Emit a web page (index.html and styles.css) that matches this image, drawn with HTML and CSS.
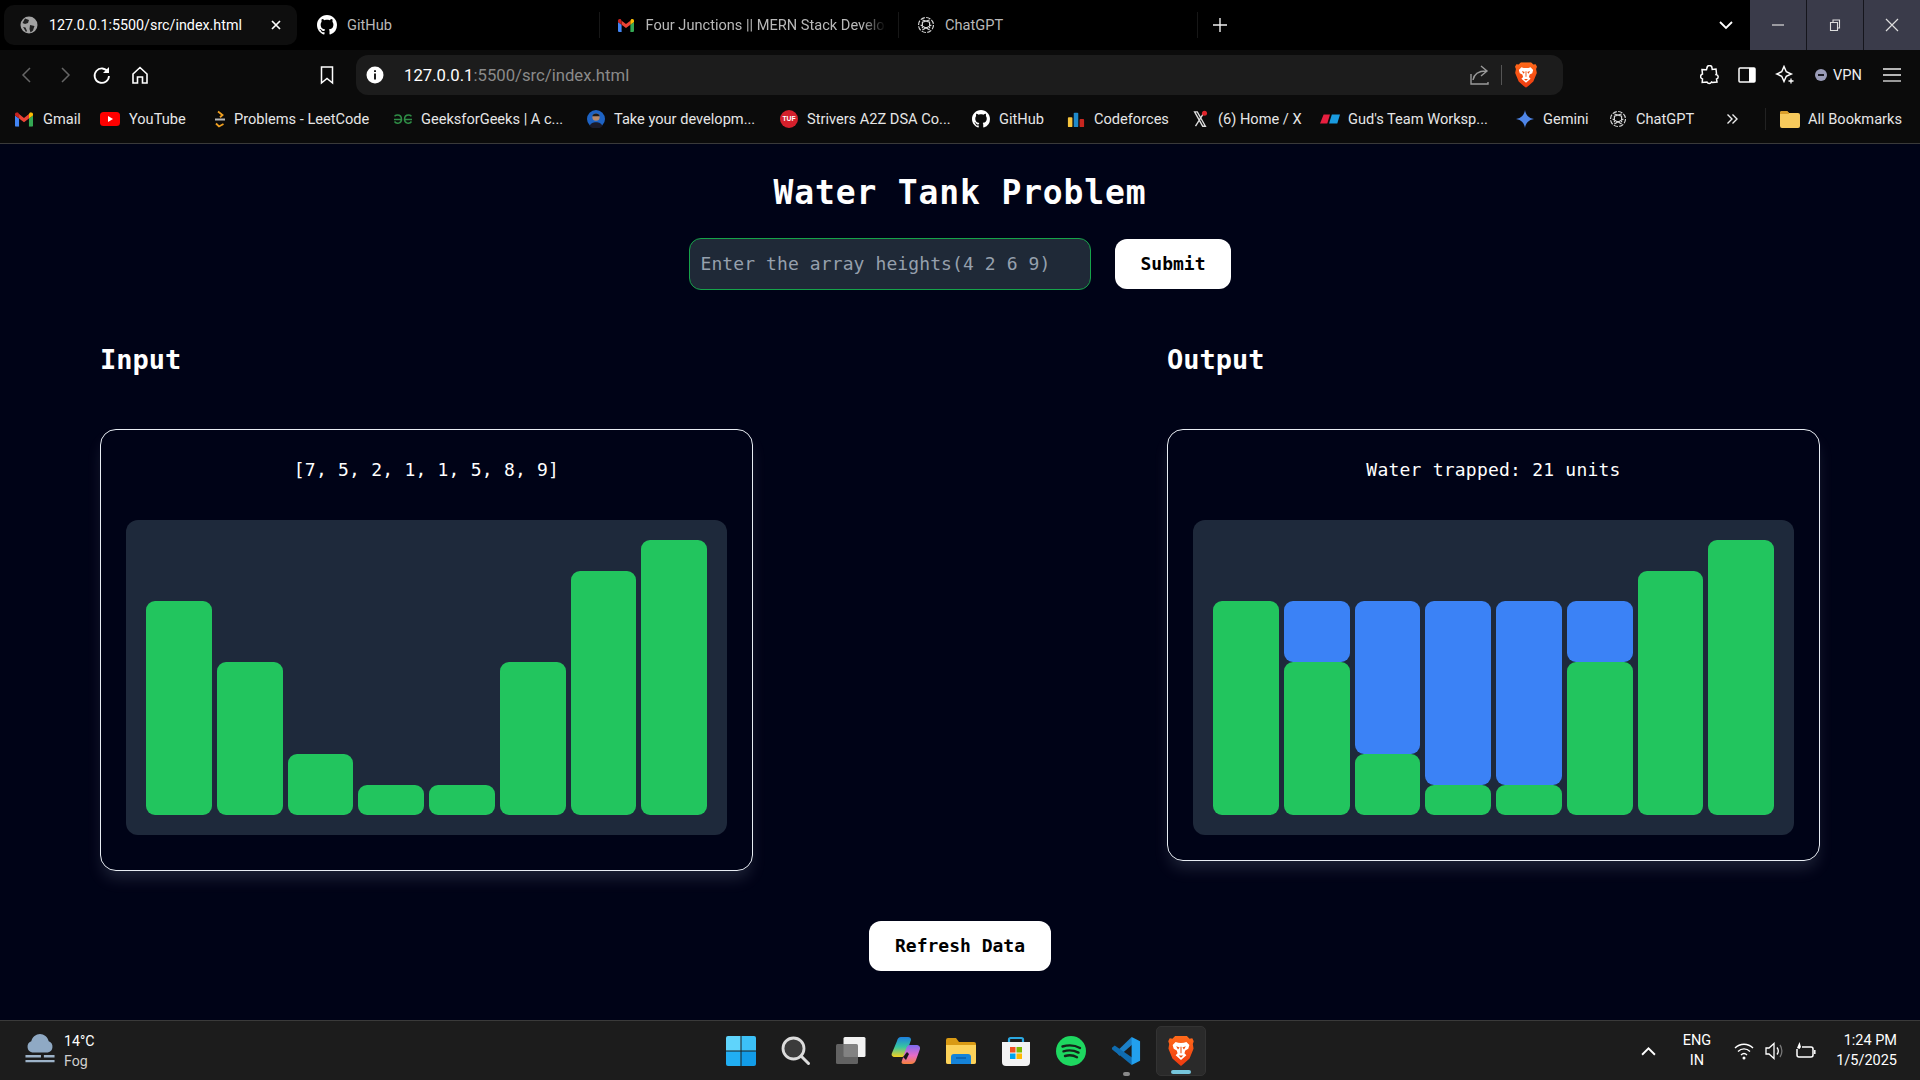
FILE: index.html
```html
<!DOCTYPE html>
<html lang="en">
<head>
<meta charset="utf-8">
<title>Water Tank Problem</title>
<link rel="stylesheet" href="styles.css">
</head>
<body>
<svg class="defs" aria-hidden="true">
  <defs>
    <linearGradient id="braveg" x1="0" y1="0" x2="0" y2="1"><stop offset="0" stop-color="#ff6a1a"/><stop offset="1" stop-color="#ee3a10"/></linearGradient>
  </defs>
  <symbol id="github" viewBox="0 0 16 16"><path fill="#fff" d="M8 0C3.58 0 0 3.58 0 8c0 3.54 2.29 6.53 5.47 7.59.4.07.55-.17.55-.38 0-.19-.01-.82-.01-1.49-2.01.37-2.53-.49-2.69-.94-.09-.23-.48-.94-.82-1.13-.28-.15-.68-.52-.01-.53.63-.01 1.08.58 1.23.82.72 1.21 1.87.87 2.33.66.07-.52.28-.87.51-1.07-1.78-.2-3.64-.89-3.64-3.95 0-.87.31-1.59.82-2.15-.08-.2-.36-1.02.08-2.12 0 0 .67-.21 2.2.82.64-.18 1.32-.27 2-.27.68 0 1.36.09 2 .27 1.53-1.04 2.2-.82 2.2-.82.44 1.1.16 1.92.08 2.12.51.56.82 1.27.82 2.15 0 3.07-1.87 3.75-3.65 3.95.29.25.54.73.54 1.48 0 1.07-.01 1.93-.01 2.2 0 .21.15.46.55.38A8.013 8.013 0 0016 8c0-4.42-3.58-8-8-8z"/></symbol>
  <symbol id="gmail" viewBox="0 0 20 16"><path fill="#4285f4" d="M1 16h3.500V7L0 3.500V15a1 1 0 0 0 1 1z"/><path fill="#34a853" d="M15.500 16H19a1 1 0 0 0 1-1V3.500L15.500 7z"/><path fill="#ea4335" d="M4.500 7V2L10 6.200 15.500 2v5L10 11z"/><path fill="#fbbc04" d="M15.500 2v5L20 3.500V2c0-1.800-2.100-2.800-3.500-1.700z"/><path fill="#c5221f" d="M0 3.500 4.500 7V2L3.500.3C2.100-.8 0 .2 0 2z"/></symbol>
  <symbol id="gpt" viewBox="0 0 20 20"><g fill="none" stroke="#d8d8d8" stroke-width="1.300"><circle cx="10" cy="10" r="8.300" stroke-dasharray="5 1.500"/><path d="M6 4.500 14 7v6.500M14 4.500 6 7v6.500M4 10l6 3.500 6-3.500M6 15.500 10 13l4 2.500"/></g></symbol>
  <symbol id="brave" viewBox="0 0 24 28"><path fill="url(#braveg)" d="M6.500 0h11l2.500 2.500 2.500-.3L24 5l-1 2.500.8 4.200L20 21l-5.500 5L12 28l-2.500-2L4 21 .2 11.700 1 7.500 0 5l1.500-2.800L4 2.500z"/><path fill="#fff" d="M7 5.500c3 1.300 7 1.300 10 0l2.800 3-1 3.500-2.800 1.500-.8 2.700 1.800 1.800L12 22.500 7 18l1.800-1.800L8 13.500 5.200 12l-1-3.500z"/><path fill="#f1500e" d="M7.500 9.500l3.200 1.200-1.500 1.800zM16.500 9.500l-3.200 1.200 1.500 1.800zM9.800 18.300h4.400L12 20.300zM11.500 10h1v6h-1z"/></symbol>
</svg>

<header class="chrome">
  <div class="tabstrip">
    <div class="tab tab-active">
      <svg class="ico-18" viewBox="0 0 18 18"><circle cx="9" cy="9" r="8.500" fill="#a3a3a3"/><path fill="#222" d="M5 2.500 9 4l-1 3-3 1-2.500-1zM10 9l4.500 1-1.500 4.500-2.500 2-1-3.500zM3 11l2.500.5L7 15l-1 1z"/></svg>
      <span class="tab-title tab-title-on">127.0.0.1:5500/src/index.html</span>
      <svg class="tab-close" viewBox="0 0 10 10"><path d="M1 1l8 8M9 1 1 9" stroke="#fff" stroke-width="1.700"/></svg>
    </div>
    <div class="tab">
      <svg class="ico-20" viewBox="0 0 16 16"><use href="#github"/></svg>
      <span class="tab-title">GitHub</span>
    </div>
    <div class="tab tab-sep">
      <svg class="ico-gmail" viewBox="0 0 20 16"><use href="#gmail"/></svg>
      <span class="tab-title tab-fade">Four Junctions || MERN Stack Develop</span>
    </div>
    <div class="tab tab-sep tab-last">
      <svg class="ico-18" viewBox="0 0 20 20"><use href="#gpt"/></svg>
      <span class="tab-title">ChatGPT</span>
    </div>
    <svg class="new-tab" viewBox="0 0 14 14"><path d="M7 0v14M0 7h14" stroke="#eee" stroke-width="1.400"/></svg>
    <svg class="tab-search" viewBox="0 0 14 9"><path d="M1 1l6 6 6-6" fill="none" stroke="#fff" stroke-width="1.800"/></svg>
    <div class="winbtns">
      <div class="winbtn"><svg class="win-ico" viewBox="0 0 14 14"><path d="M1 7h12" stroke="#ddd" stroke-width="1.200"/></svg></div>
      <div class="winbtn"><svg class="win-ico" viewBox="0 0 14 14"><path d="M2.500 4.500h7v8h-7zM5 4.500V2h6.500v8h-2" fill="none" stroke="#ddd" stroke-width="1.100"/></svg></div>
      <div class="winbtn"><svg class="win-ico" viewBox="0 0 14 14"><path d="M1 1l12 12M13 1 1 13" stroke="#ddd" stroke-width="1.200"/></svg></div>
    </div>
  </div>

  <div class="toolbar">
    <svg class="tb-ico tb-back" viewBox="0 0 20 20"><path d="M13 3 6 10l7 7" fill="none" stroke="#666" stroke-width="1.500"/></svg>
    <svg class="tb-ico tb-fwd" viewBox="0 0 20 20"><path d="M7 3l7 7-7 7" fill="none" stroke="#666" stroke-width="1.500"/></svg>
    <svg class="tb-ico tb-reload" viewBox="0 0 20 20"><path d="M16 7a7.200 7.200 0 1 0 1 4" fill="none" stroke="#fff" stroke-width="1.800"/><path d="M17 2v6h-6z" fill="#fff"/></svg>
    <svg class="tb-ico tb-home" viewBox="0 0 20 20"><path d="M3 9l7-6.500L17 9v9h-4.500v-6h-5v6H3z" fill="none" stroke="#fff" stroke-width="1.600"/></svg>
    <svg class="tb-ico tb-mark" viewBox="0 0 20 20"><path d="M4.500 2h11v16L10 13.500 4.500 18z" fill="none" stroke="#fff" stroke-width="1.500"/></svg>
    <div class="omnibox">
      <svg class="omni-info" viewBox="0 0 18 18"><circle cx="9" cy="9" r="8.500" fill="#fff"/><path d="M9 7.500v6M9 4.300v1.700" stroke="#1c1c1c" stroke-width="2"/></svg>
      <span class="url"><span class="url-host">127.0.0.1</span>:5500/src/index.html</span>
      <svg class="omni-share" viewBox="0 0 22 22"><path d="M2 10v10h17v-2M4 16c1-6 5-9 13-9M12 2l6 5-6 5" fill="none" stroke="#9a9a9a" stroke-width="1.400"/></svg>
      <span class="omni-div"></span>
      <svg class="omni-brave" viewBox="0 0 24 28"><use href="#brave"/></svg>
    </div>
    <svg class="tb-ico tb-ext" viewBox="0 0 20 20"><path d="M7 3a2.500 2.500 0 0 1 5 0l.2 1.500 3.800-.5.500 4.500-.5 1a2.300 2.300 0 0 1 .5 4.500l.5 3-4.500.5-1-.5a2.500 2.500 0 0 1-4.500 0l-4.800.5L2.500 14a2.600 2.600 0 0 1 0-5L2 4.500l4.500.3z" fill="none" stroke="#fff" stroke-width="1.500"/></svg>
    <svg class="tb-ico tb-side" viewBox="0 0 20 20"><rect x="2" y="3" width="16" height="14" rx="1" fill="none" stroke="#fff" stroke-width="1.500"/><rect x="12" y="3" width="6" height="14" fill="#fff"/></svg>
    <svg class="tb-ico tb-leo" viewBox="0 0 20 20"><path d="M9 1.500l2.300 5.200 5 2.300-5 2.300L9 16.500l-2.300-5.200-5-2.300 5-2.300z" fill="none" stroke="#fff" stroke-width="1.500"/><path d="M16 13.500v5M13.500 16h5" stroke="#fff" stroke-width="1.300"/></svg>
    <div class="vpn"><span class="vpn-dot"></span><span>VPN</span></div>
    <svg class="tb-ico tb-menu" viewBox="0 0 20 20"><path d="M1 4h18M1 10h18" stroke="#eee" stroke-width="1.500"/><path d="M1 16h18" stroke="#aaa" stroke-width="1.800"/></svg>
  </div>

  <div class="bookmarks">
    <div class="bm bm-gmail"><svg class="bm-ico" viewBox="0 0 20 16"><use href="#gmail"/></svg><span>Gmail</span></div>
    <div class="bm bm-yt"><svg class="bm-ico" viewBox="0 0 20 16"><rect y="1" width="20" height="14" rx="3.500" fill="#f00"/><path d="M8 5l5 3-5 3z" fill="#fff"/></svg><span>YouTube</span></div>
    <div class="bm bm-lc"><svg class="bm-ico" viewBox="0 0 12 18"><path d="M4 1.500 8.500 5 6 7.200M2 13.500l3 3 4.500-2.500" fill="none" stroke="#f0a020" stroke-width="1.800"/><path d="M1 9.500h10" stroke="#b8b8b8" stroke-width="2"/></svg><span>Problems - LeetCode</span></div>
    <div class="bm bm-gfg"><svg class="bm-ico" viewBox="0 0 20 14"><g fill="none" stroke="#2f8d46" stroke-width="1.500"><path d="M1 7.500h7.500c0-3-2-4.500-4-4.500-1.300 0-2.200.5-3 1.200M8.500 7.500a3.800 3.800 0 0 1-7 2M19 7.500h-7.500c0-3 2-4.500 4-4.500 1.300 0 2.200.5 3 1.200M11.500 7.500a3.800 3.800 0 0 0 7 2"/></g></svg><span>GeeksforGeeks | A c...</span></div>
    <div class="bm bm-take"><svg class="bm-ico" viewBox="0 0 20 20"><circle cx="10" cy="10" r="10" fill="#1e63c4"/><circle cx="10" cy="8" r="4" fill="#b98a6b"/><path d="M6 7c0-4 8-4 8 0z" fill="#1a1a1a"/><path d="M3 18c1-6 13-6 14 0a10 10 0 0 1-14 0z" fill="#1b1b2a"/></svg><span>Take your developm...</span></div>
    <div class="bm bm-tuf"><svg class="bm-ico" viewBox="0 0 20 20"><circle cx="10" cy="10" r="10" fill="#d5202c"/><text x="10" y="12.500" class="tuf-txt" text-anchor="middle">TUF</text></svg><span>Strivers A2Z DSA Co...</span></div>
    <div class="bm bm-gh"><svg class="bm-ico" viewBox="0 0 16 16"><use href="#github"/></svg><span>GitHub</span></div>
    <div class="bm bm-cf"><svg class="bm-ico" viewBox="0 0 20 20"><rect x="1" y="8" width="5" height="11" rx="1" fill="#f6c43d"/><rect x="7.500" y="3" width="5" height="16" rx="1" fill="#1f8acb"/><rect x="14" y="10" width="5" height="9" rx="1" fill="#c8261f"/></svg><span>Codeforces</span></div>
    <div class="bm bm-x"><svg class="bm-ico" viewBox="0 0 20 20"><path d="M4 2h3l9 16h-3zM15 2 5 18" fill="none" stroke="#ddd" stroke-width="1.500"/><circle cx="15" cy="3.500" r="2.800" fill="#e0252c"/></svg><span>(6) Home / X</span></div>
    <div class="bm bm-gud"><svg class="bm-ico" viewBox="0 0 22 14"><path d="M4 2h7L8 12H0z" fill="#e81f3f"/><path d="M13 2h9l-3 10h-9z" fill="#1a9be0"/></svg><span>Gud's Team Worksp...</span></div>
    <div class="bm bm-gem"><svg class="bm-ico" viewBox="0 0 20 20"><path d="M10 0c.8 5.500 4 9 10 10-6 1-9.200 4.500-10 10-.8-5.500-4-9-10-10 6-1 9.200-4.500 10-10z" fill="#4f86e8"/></svg><span>Gemini</span></div>
    <div class="bm bm-gpt"><svg class="bm-ico" viewBox="0 0 20 20"><use href="#gpt"/></svg><span>ChatGPT</span></div>
    <svg class="bm-more" viewBox="0 0 12 12"><path d="M1.500 1.500 6 6l-4.500 4.500M6.500 1.500 11 6l-4.500 4.500" fill="none" stroke="#eee" stroke-width="1.400"/></svg>
    <span class="bm-sep"></span>
    <div class="bm bm-all"><svg class="bm-ico" viewBox="0 0 20 18"><path d="M0 3a2 2 0 0 1 2-2h5l2 2h9a2 2 0 0 1 2 2v11a2 2 0 0 1-2 2H2a2 2 0 0 1-2-2z" fill="#f6c95c"/><path d="M0 3a2 2 0 0 1 2-2h5l2 2v1H0z" fill="#d99e2b"/></svg><span>All Bookmarks</span></div>
  </div>
</header>

<main class="page">
  <h1 class="title">Water Tank Problem</h1>
  <form class="form">
    <input class="array-input" type="text" placeholder="Enter the array heights(4 2 6 9)">
    <button class="btn btn-submit" type="button">Submit</button>
  </form>
  <section class="panels">
    <div class="panel">
      <h2 class="panel-title">Input</h2>
      <div class="card card-input">
        <p class="card-text">[7, 5, 2, 1, 1, 5, 8, 9]</p>
        <div class="chart">
          <div class="col"><div class="bar land" style="--v:7"></div></div>
          <div class="col"><div class="bar land" style="--v:5"></div></div>
          <div class="col"><div class="bar land" style="--v:2"></div></div>
          <div class="col"><div class="bar land" style="--v:1"></div></div>
          <div class="col"><div class="bar land" style="--v:1"></div></div>
          <div class="col"><div class="bar land" style="--v:5"></div></div>
          <div class="col"><div class="bar land" style="--v:8"></div></div>
          <div class="col"><div class="bar land" style="--v:9"></div></div>
        </div>
      </div>
    </div>
    <div class="panel">
      <h2 class="panel-title">Output</h2>
      <div class="card">
        <p class="card-text">Water trapped: 21 units</p>
        <div class="chart">
          <div class="col"><div class="bar land" style="--v:7"></div></div>
          <div class="col"><div class="bar water" style="--v:2"></div><div class="bar land" style="--v:5"></div></div>
          <div class="col"><div class="bar water" style="--v:5"></div><div class="bar land" style="--v:2"></div></div>
          <div class="col"><div class="bar water" style="--v:6"></div><div class="bar land" style="--v:1"></div></div>
          <div class="col"><div class="bar water" style="--v:6"></div><div class="bar land" style="--v:1"></div></div>
          <div class="col"><div class="bar water" style="--v:2"></div><div class="bar land" style="--v:5"></div></div>
          <div class="col"><div class="bar land" style="--v:8"></div></div>
          <div class="col"><div class="bar land" style="--v:9"></div></div>
        </div>
      </div>
    </div>
  </section>
  <button class="btn btn-refresh" type="button">Refresh Data</button>
</main>

<footer class="taskbar">
  <div class="weather">
    <svg class="weather-ico" viewBox="0 0 30 32"><path d="M7 19a6 6 0 0 1-1-11.500C7 3 11 0 15 0s8 3 9 7.500A6 6 0 0 1 23 19z" fill="#8fa9c4"/><path d="M0 23h16M19 23h11M0 28h30" stroke="#9db3c9" stroke-width="2.500"/></svg>
    <div class="weather-text"><span class="temp">14°C</span><span class="cond">Fog</span></div>
  </div>
  <div class="task-icons">
    <div class="task-item"><svg class="task-ico" viewBox="0 0 30 30"><path d="M0 2a2 2 0 0 1 2-2h12.500v14.500H0z" fill="#5fd4fb"/><path d="M15.500 0H28a2 2 0 0 1 2 2v12.500H15.500z" fill="#3cc1f7"/><path d="M0 15.500h14.500V30H2a2 2 0 0 1-2-2z" fill="#21aef2"/><path d="M15.500 15.500H30V28a2 2 0 0 1-2 2H15.500z" fill="#129ce8"/></svg></div>
    <div class="task-item"><svg class="task-ico" viewBox="0 0 30 30"><circle cx="12.500" cy="12.500" r="10.500" fill="#3b3b3b" stroke="#dcdcdc" stroke-width="2.800"/><path d="M20 20l7.500 7.500" stroke="#dcdcdc" stroke-width="3" stroke-linecap="round"/></svg></div>
    <div class="task-item"><svg class="task-ico" viewBox="0 0 30 30"><rect x="7.500" y="1" width="22" height="20" rx="1.500" fill="#f2f2f2"/><rect x="0" y="8" width="22" height="20" rx="1.500" fill="#6e6e6e" fill-opacity=".85"/></svg></div>
    <div class="task-item"><svg class="task-ico" viewBox="0 0 30 30"><defs><linearGradient id="cpa" x1="0" y1="0" x2="0" y2="1"><stop offset="0" stop-color="#1d7fe0"/><stop offset=".5" stop-color="#37c6a0"/><stop offset="1" stop-color="#f5d020"/></linearGradient><linearGradient id="cpb" x1="0" y1="0" x2="0" y2="1"><stop offset="0" stop-color="#7c6bf0"/><stop offset=".55" stop-color="#e56bc8"/><stop offset="1" stop-color="#f7813b"/></linearGradient></defs><path d="M10 1h7c2 0 3 1 3 3l-5 14c-.6 2-2 3-4 3H4c-3 0-4-2-3-4L6 5c.6-2.500 2-4 4-4z" fill="url(#cpa)"/><path d="M19 9h6c3 0 4.800 2 3.800 4.500L25 24c-.8 2.500-2.500 4-5 4h-7c-2.500 0-3-1.500-2-3.500L15 13c.8-2.500 2-4 4-4z" fill="url(#cpb)"/><path d="M16 16l-4 5 3 3 3-6z" fill="#17171c"/></svg></div>
    <div class="task-item"><svg class="task-ico" viewBox="0 0 30 30"><path d="M0 4a2 2 0 0 1 2-2h8l3 4h15a2 2 0 0 1 2 2v18a2 2 0 0 1-2 2H2a2 2 0 0 1-2-2z" fill="#d99a14"/><path d="M0 9h30v17a2 2 0 0 1-2 2H2a2 2 0 0 1-2-2z" fill="#fcd25a"/><path d="M5 28v-7a3 3 0 0 1 3-3h14a3 3 0 0 1 3 3v7z" fill="#1583d9"/><path d="M10 22h10" stroke="#0b5ea8" stroke-width="1.500"/></svg></div>
    <div class="task-item"><svg class="task-ico" viewBox="0 0 30 30"><path d="M8 6V3.500A1.500 1.500 0 0 1 9.500 2h11A1.500 1.500 0 0 1 22 3.500V6" fill="none" stroke="#2aa7e0" stroke-width="2.200"/><path d="M1 6h28v20a4 4 0 0 1-4 4H5a4 4 0 0 1-4-4z" fill="#f3f3f3"/><rect x="9" y="11" width="5.500" height="5.500" fill="#f25022"/><rect x="15.500" y="11" width="5.500" height="5.500" fill="#7fba00"/><rect x="9" y="17.500" width="5.500" height="5.500" fill="#00a4ef"/><rect x="15.500" y="17.500" width="5.500" height="5.500" fill="#ffb900"/></svg></div>
    <div class="task-item"><svg class="task-ico" viewBox="0 0 30 30"><circle cx="15" cy="15" r="15" fill="#1ed760"/><path d="M6.500 10.500c6-1.800 12.500-1.300 17.500 1.500M7.500 15.300c5-1.500 10.500-1 15 1.300M9 20c4-1.100 8.500-.8 12 1.200" fill="none" stroke="#14241a" stroke-width="2.400" stroke-linecap="round"/></svg></div>
    <div class="task-item task-open"><svg class="task-ico" viewBox="0 0 32 32"><path d="M22 1 5.500 17l3.500 4L24 8z" fill="#1c80c8"/><path d="M4 10 1 12.500v1.500l3.500 3 3 2L22 31l2-7z" fill="#0f6cb0"/><path d="M22 1l9 4.500v21L22 31z" fill="#22a0ee"/></svg></div>
    <div class="task-item task-active"><svg class="task-ico task-brave" viewBox="0 0 24 28"><use href="#brave"/></svg></div>
  </div>
  <div class="tray">
    <svg class="tray-chev" viewBox="0 0 14 9"><path d="M1 8l6-6 6 6" fill="none" stroke="#fff" stroke-width="1.800"/></svg>
    <div class="lang"><span>ENG</span><span>IN</span></div>
    <svg class="tray-ico tray-wifi" viewBox="0 0 20 20"><path d="M1 7c5-5 13-5 18 0M4 10.500c3.500-3.500 8.500-3.500 12 0M7 14c1.800-1.700 4.200-1.700 6 0" fill="none" stroke="#fff" stroke-width="1.400"/><circle cx="10" cy="17" r="1.500" fill="#fff"/></svg>
    <svg class="tray-ico tray-vol" viewBox="0 0 20 20"><path d="M2 7h3l5-4.500v15L5 13H2zM13 6.500c1.500 2 1.500 5 0 7" fill="none" stroke="#fff" stroke-width="1.300"/><path d="M16 4c2.500 3.500 2.500 8.500 0 12" fill="none" stroke="#777" stroke-width="1.300"/></svg>
    <svg class="tray-ico tray-bat" viewBox="0 0 22 20"><path d="M7 6h9a2 2 0 0 1 2 2v6a2 2 0 0 1-2 2H4a2 2 0 0 1-2-2V8" fill="none" stroke="#fff" stroke-width="1.500"/><path d="M19.800 9v4" stroke="#fff" stroke-width="1.500"/><path d="M4.500 1 2 7l2.500 1L6 6z" fill="#fff"/></svg>
    <div class="clock"><span>1:24 PM</span><span>1/5/2025</span></div>
  </div>
</footer>
</body>
</html>
```

FILE: styles.css
```css
* { box-sizing: border-box; }
html, body { margin: 0; height: 100%; }
body {
  width: 1920px;
  height: 1080px;
  overflow: hidden;
  display: flex;
  flex-direction: column;
  background: #000317;
  font-family: Roboto, "Liberation Sans", sans-serif;
  color: #fff;
}
.defs { position: absolute; width: 0; height: 0; }
svg { flex: none; display: block; }

/* browser chrome */
.chrome { height: 144px; flex: none; background: #0b0b0b; border-bottom: 1px solid #3a3a3a; }
.tabstrip { height: 50px; background: #000; display: flex; align-items: center; }
.tab {
  width: 299.500px;
  height: 40px;
  display: flex;
  align-items: center;
  gap: 10px;
  padding-left: 18px;
  font-size: 14.600px;
  color: #b9b9b9;
  white-space: nowrap;
  overflow: hidden;
}
.tab-active { background: #0e0e0e; border-radius: 10px; margin-left: 4px; width: 293px; padding-left: 16px; padding-right: 16px; margin-right: 2px; color: #fff; font-size: 14.300px; gap: 11px; }
.tab-sep { border-left: 1px solid #171717; height: 26px; gap: 12px; }
.tab-last { border-right: 1px solid #171717; gap: 10px; }
.tab-title { flex: none; }
.tab-title-on { flex: 1; }
.tab-fade { width: 240px; overflow: hidden; -webkit-mask-image: linear-gradient(90deg, #000 90%, transparent); mask-image: linear-gradient(90deg, #000 90%, transparent); }
.tab-close { width: 10px; height: 10px; }
.ico-18 { width: 18px; height: 18px; }
.ico-20 { width: 20px; height: 20px; }
.ico-gmail { width: 16px; height: 13px; }
.new-tab { width: 14px; height: 14px; margin-left: 15px; }
.tab-search { width: 14px; height: 9px; margin-left: 492px; }
.winbtns { margin-left: auto; width: 170px; height: 50px; display: flex; gap: 1px; background: #15151c; }
.winbtn { flex: 1; background: #3a3b4a; display: flex; align-items: center; justify-content: center; }
.win-ico { width: 14px; height: 14px; }

.toolbar { height: 50px; display: flex; align-items: center; }
.tb-ico { width: 20px; height: 20px; }
.tb-back { margin-left: 17px; }
.tb-fwd { margin-left: 18px; }
.tb-reload { margin-left: 17px; }
.tb-home { margin-left: 18px; }
.tb-mark { margin-left: 167px; }
.omnibox {
  margin-left: 19px;
  width: 1207px;
  height: 40px;
  background: #1c1c1c;
  border-radius: 12px;
  display: flex;
  align-items: center;
  padding-left: 10px;
  font-size: 16.700px;
  color: #8a8a8a;
}
.omni-info { width: 18px; height: 18px; }
.url { margin-left: 20px; flex: 1; }
.url-host { color: #fff; }
.omni-share { width: 22px; height: 22px; }
.omni-div { width: 1px; height: 20px; background: #555; margin: 0 13px 0 10px; }
.omni-brave { width: 22px; height: 26px; margin-right: 26px; }
.tb-ext { margin-left: 137px; }
.tb-side { margin-left: 17px; }
.tb-leo { margin-left: 18px; }
.vpn { margin-left: 20px; display: flex; align-items: center; gap: 6px; font-size: 14.600px; color: #eee; }
.vpn-dot { width: 12px; height: 12px; border-radius: 50%; background: #9a9cb8; position: relative; }
.vpn-dot::after { content: ""; position: absolute; left: 3px; right: 3px; top: 5px; height: 2px; background: #1b1b24; }
.tb-menu { margin-left: 20px; }

.bookmarks { height: 43px; padding: 0 0 5px 15px; display: flex; align-items: center; font-size: 14.600px; color: #e6e6e6; white-space: nowrap; }
.bm { display: flex; align-items: center; gap: 8px; }
.bm-ico { width: 20px; height: 18px; }
.bm-gmail .bm-ico { width: 18px; height: 15px; }
.bm-gmail { width: 85px; gap: 10px; }
.bm-yt { width: 114px; gap: 9px; }
.bm-lc { width: 179px; }
.bm-lc .bm-ico { width: 12px; height: 18px; }
.bm-gfg { width: 193px; }
.bm-take { width: 193px; }
.bm-tuf { width: 192px; }
.bm-gh { width: 95px; }
.bm-cf { width: 124px; }
.bm-x { width: 130px; }
.bm-gud { width: 195px; }
.bm-gem { width: 93px; }
.bm-gpt { width: 118px; }
.bm-more { width: 12px; height: 12px; margin-left: 0; }
.bm-sep { width: 1px; height: 22px; background: #222; margin-left: 27px; }
.bm-all { margin-left: 14px; }
.tuf-txt { font: 800 7.500px "Liberation Sans", sans-serif; fill: #fff; }

/* page */
.page {
  flex: 1;
  display: flex;
  flex-direction: column;
  align-items: center;
  padding: 29px 100px 0;
  font-family: "DejaVu Sans Mono", "Liberation Mono", monospace;
}
.title { margin: 0; font-size: 33px; line-height: 40px; font-weight: 700; letter-spacing: .85px; }
.form { display: flex; align-items: center; gap: 24px; margin-top: 25px; }
.array-input {
  width: 402px;
  height: 52px;
  padding: 0 10px 2px;
  background: #1f2937;
  border: 1px solid #16a34a;
  border-radius: 12px;
  color: #fff;
  font: 18px "DejaVu Sans Mono", monospace;
  letter-spacing: .1px;
  outline: none;
}
.array-input::placeholder { color: #96a0ad; opacity: 1; }
.btn {
  height: 50px;
  padding: 0 25px 2px;
  border: 0;
  border-radius: 12px;
  background: #fff;
  color: #000;
  font: 700 18px "DejaVu Sans Mono", monospace;
}
.panels { width: 100%; display: flex; justify-content: space-between; align-items: flex-start; margin-top: 52px; }
.panel { width: 653px; }
.panel-title { margin: 0 0 51px; font-size: 27px; line-height: 36px; font-weight: 700; }
.card {
  border: 1px solid #e8edf3;
  border-radius: 16px;
  padding: 25px;
  box-shadow: 0 10px 16px -3px rgba(148, 163, 184, .2);
}
.card-input { padding-bottom: 35px; }
.card-text { margin: 0 0 36px; padding-top: 1px; text-align: center; font-size: 18px; line-height: 28px; letter-spacing: .22px; }
.chart {
  height: 315px;
  padding: 20px;
  background: #1e293b;
  border-radius: 12px;
  display: flex;
  gap: 5px;
  align-items: flex-end;
}
.col { flex: 1; display: flex; flex-direction: column; justify-content: flex-end; }
.bar { height: calc(var(--v) * 30.580px - .250px); border-radius: 9px; }
.land { background: #22c55e; }
.water { background: #3b82f6; }
.btn-refresh { margin-top: 50px; padding-left: 26px; padding-right: 26px; }

/* taskbar */
.taskbar {
  height: 60px;
  flex: none;
  display: flex;
  align-items: center;
  background: #1c1c1c;
  border-top: 1px solid #3a3a3a;
  font-size: 14.500px;
}
.weather { display: flex; align-items: center; gap: 9px; padding-left: 25px; width: 713px; }
.weather-ico { width: 30px; height: 31px; margin-bottom: 2px; }
.weather-text { display: flex; flex-direction: column; line-height: 20px; font-size: 14.200px; padding-top: 1px; }
.cond { color: #cfcfcf; }
.task-icons { display: flex; align-items: center; }
.task-item { width: 55px; height: 50px; display: flex; align-items: center; justify-content: center; position: relative; }
.task-ico { width: 30px; height: 30px; }
.task-brave { width: 26px; height: 30px; }
.task-open::after { content: ""; position: absolute; left: 25px; bottom: 0; width: 7px; height: 4px; border-radius: 2px; background: #8a8a8a; }
.task-active { background: #2a2a2a; border-radius: 5px; width: 50px; margin-left: 3px; border: 1px solid #333; }
.task-active::after { content: ""; position: absolute; left: 14px; bottom: 1px; width: 20px; height: 4px; border-radius: 2px; background: #76c6dc; }
.tray { display: flex; align-items: center; margin-left: auto; }
.tray-chev { width: 15px; height: 10px; }
.lang { display: flex; flex-direction: column; align-items: center; line-height: 20px; width: 40px; margin-left: 21px; }
.tray-ico { width: 20px; height: 20px; }
.tray-wifi { margin-left: 17px; }
.tray-vol { margin-left: 10px; }
.tray-bat { margin-left: 11px; width: 22px; }
.clock { display: flex; flex-direction: column; align-items: flex-end; line-height: 20px; width: 68px; margin: 0 23px 0 12px; }
```
